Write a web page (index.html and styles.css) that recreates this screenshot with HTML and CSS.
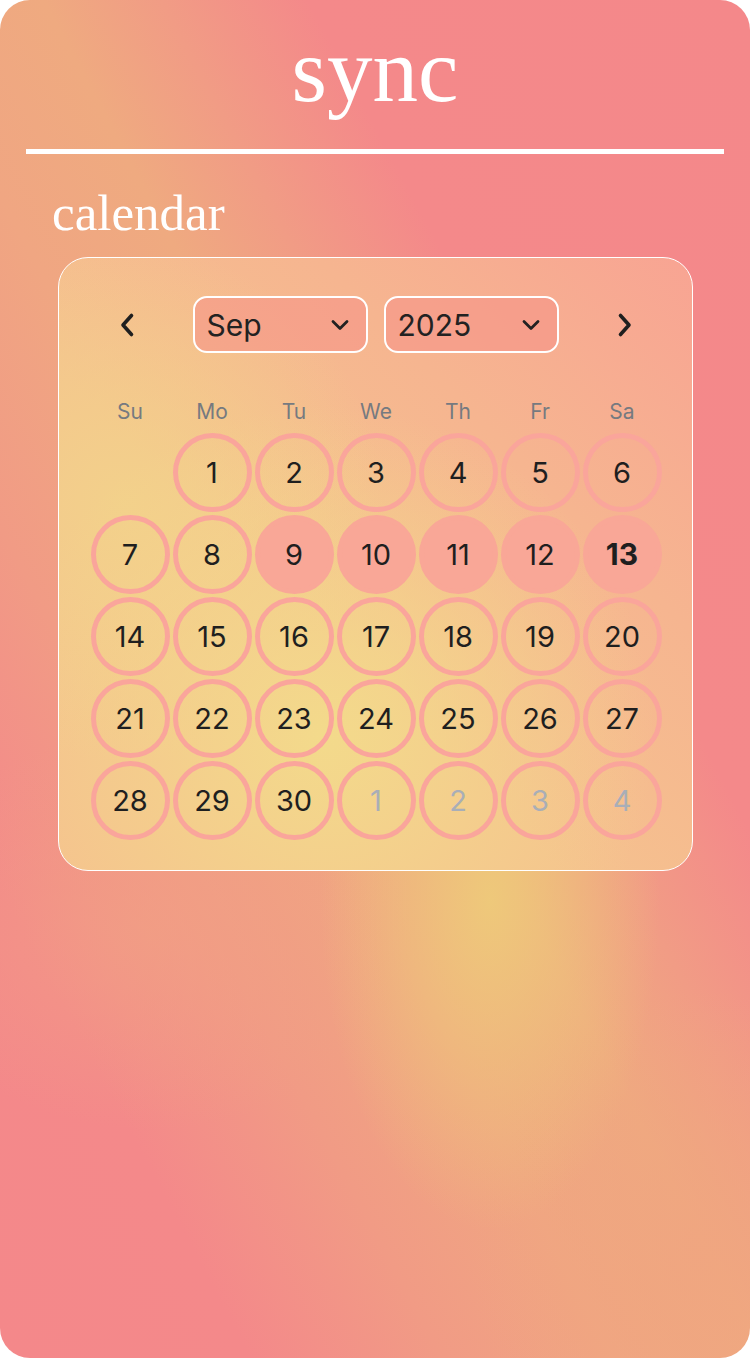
FILE: index.html
```
<!doctype html>
<html lang="en">
    <head>
        <title>sync</title>
        <link rel="stylesheet" href="styles.css">
    </head>
    <body>
        <div id="app" class="app">
            <h1 class="brand">sync</h1>
            <hr class="divider">

            <section id="calendarSection" class="calendar-section">
                <h2 class="section-title">calendar</h2>
                <div id="calendarCard" class="calendar-card">
                    <div class="cal-nav">
                        <button class="nav-btn" aria-label="Previous month">
                            <svg width="18" height="26" viewBox="0 0 18 26"><path d="M13.5 3.5 L5 13 L13.5 22.5" /></svg>
                        </button>
                        <div class="cal-selects">
                            <div class="cal-select">
                                <span>Sep</span>
                                <svg width="20" height="12" viewBox="0 0 20 12"><path d="M3 2.5 L10 9.5 L17 2.5" /></svg>
                            </div>
                            <div class="cal-select">
                                <span>2025</span>
                                <svg width="20" height="12" viewBox="0 0 20 12"><path d="M3 2.5 L10 9.5 L17 2.5" /></svg>
                            </div>
                        </div>
                        <button class="nav-btn" aria-label="Next month">
                            <svg width="18" height="26" viewBox="0 0 18 26"><path d="M4.5 3.5 L13 13 L4.5 22.5" /></svg>
                        </button>
                    </div>

                    <div class="cal-grid">
                        <div class="weekday">Su</div>
                        <div class="weekday">Mo</div>
                        <div class="weekday">Tu</div>
                        <div class="weekday">We</div>
                        <div class="weekday">Th</div>
                        <div class="weekday">Fr</div>
                        <div class="weekday">Sa</div>

                        <!-- week 1 -->
                        <div class="day empty"></div>
                        <div class="day"><span>1</span></div>
                        <div class="day"><span>2</span></div>
                        <div class="day"><span>3</span></div>
                        <div class="day"><span>4</span></div>
                        <div class="day"><span>5</span></div>
                        <div class="day"><span>6</span></div>
                        <!-- week 2 -->
                        <div class="day"><span>7</span></div>
                        <div class="day"><span>8</span></div>
                        <div class="day filled"><span>9</span></div>
                        <div class="day filled"><span>10</span></div>
                        <div class="day filled"><span>11</span></div>
                        <div class="day filled"><span>12</span></div>
                        <div class="day filled today"><span>13</span></div>
                        <!-- week 3 -->
                        <div class="day"><span>14</span></div>
                        <div class="day"><span>15</span></div>
                        <div class="day"><span>16</span></div>
                        <div class="day"><span>17</span></div>
                        <div class="day"><span>18</span></div>
                        <div class="day"><span>19</span></div>
                        <div class="day"><span>20</span></div>
                        <!-- week 4 -->
                        <div class="day"><span>21</span></div>
                        <div class="day"><span>22</span></div>
                        <div class="day"><span>23</span></div>
                        <div class="day"><span>24</span></div>
                        <div class="day"><span>25</span></div>
                        <div class="day"><span>26</span></div>
                        <div class="day"><span>27</span></div>
                        <!-- week 5 -->
                        <div class="day"><span>28</span></div>
                        <div class="day"><span>29</span></div>
                        <div class="day"><span>30</span></div>
                        <div class="day outside"><span>1</span></div>
                        <div class="day outside"><span>2</span></div>
                        <div class="day outside"><span>3</span></div>
                        <div class="day outside"><span>4</span></div>
                    </div>
                </div>
            </section>
        </div>
    </body>
</html>
```

FILE: styles.css
```
body {
    margin: 0;
    padding: 0;
    background: #ffffff;
    font-family: "Inter", "Liberation Sans", sans-serif;
    color: #222222;
}
.app {
    width: 750px;
    height: 1358px;
    box-sizing: border-box;
    border-radius: 30px;
    overflow: hidden;
    display: flex;
    flex-direction: column;
    background:
        radial-gradient(ellipse 170px 330px at 490px 900px, rgba(238, 202, 122, 0.95), rgba(238, 202, 122, 0) 100%),
        radial-gradient(ellipse 230px 260px at 700px 1250px, rgba(240, 165, 128, 0.85), rgba(240, 165, 128, 0) 100%),
        radial-gradient(ellipse 260px 200px at 150px 930px, rgba(241, 160, 132, 0.7), rgba(241, 160, 132, 0) 100%),
        linear-gradient(62deg, #f4888a 0%, #f4898a 17%, #f19b85 30%, #f0a682 42%, #efaa80 52%, #f19c85 60%, #f4898a 70%, #f4888a 100%);
}

/* header */
.brand {
    margin: 25px 0 0;
    font-family: "Liberation Serif", "Times New Roman", serif;
    font-weight: 400;
    font-size: 91px;
    line-height: 92px;
    color: #ffffff;
    text-align: center;
}
.divider {
    margin: 32px 26px 0;
    height: 5px;
    border: none;
    background: #ffffff;
}

/* calendar */
.calendar-section {
    display: flex;
    flex-direction: column;
}
.section-title {
    margin: 34px 0 0 52px;
    font-family: "Liberation Serif", "Times New Roman", serif;
    font-weight: 400;
    font-size: 51px;
    line-height: 50px;
    color: #ffffff;
}
.calendar-card {
    margin: 19px 0 0 58px;
    width: 635px;
    box-sizing: border-box;
    padding: 38px 30px 29px;
    border: 1.5px solid #ffffff;
    border-radius: 30px;
    background:
        radial-gradient(ellipse 330px 330px at 42% 78%, rgba(243, 218, 139, 1), rgba(243, 214, 139, 0) 100%),
        radial-gradient(ellipse 260px 260px at 10% 40%, rgba(242, 212, 138, 0.8), rgba(242, 212, 138, 0) 100%),
        linear-gradient(225deg, #f8a493 0%, #f6b590 30%, #f5c28e 60%, #f5c28e 100%);
}
.cal-nav {
    display: grid;
    grid-template-columns: 82px 1fr 82px;
    align-items: center;
}
.nav-btn {
    display: flex;
    align-items: center;
    justify-content: center;
    background: none;
    border: none;
    padding: 0 6px 0 0;
    cursor: pointer;
}
.nav-btn:last-child {
    padding: 0 0 0 8px;
}
.nav-btn svg path {
    fill: none;
    stroke: #1f1f1f;
    stroke-width: 3.6;
    stroke-linecap: round;
    stroke-linejoin: round;
}
.cal-selects {
    display: flex;
    justify-content: center;
    gap: 16px;
}
.cal-select {
    width: 175px;
    height: 57px;
    box-sizing: border-box;
    padding: 0 16px 0 12px;
    display: flex;
    align-items: center;
    justify-content: space-between;
    border: 2px solid #ffffff;
    border-radius: 14px;
    background: rgba(245, 148, 136, 0.62);
    font-size: 30px;
    color: #222222;
}
.cal-select svg path {
    fill: none;
    stroke: #222222;
    stroke-width: 2.8;
    stroke-linecap: round;
    stroke-linejoin: round;
}

.cal-grid {
    margin-top: 46px;
    display: grid;
    grid-template-columns: repeat(7, 82px);
    grid-template-rows: 32px;
    grid-auto-rows: 82px;
}
.weekday {
    height: 26px;
    text-align: center;
    font-size: 21px;
    line-height: 26px;
    color: #767a80;
}
.day {
    display: flex;
    align-items: center;
    justify-content: center;
}
.day span {
    width: 79px;
    height: 79px;
    box-sizing: border-box;
    border: 5.5px solid #faa59b;
    border-radius: 50%;
    display: flex;
    align-items: center;
    justify-content: center;
    font-size: 29px;
    color: #1f1f1f;
}
.day.filled span {
    background: #f9a797;
    border-color: #f9a797;
}
.day.today span {
    font-weight: 700;
    font-size: 30px;
}
.day.outside span {
    color: #a9aeb7;
}
```
